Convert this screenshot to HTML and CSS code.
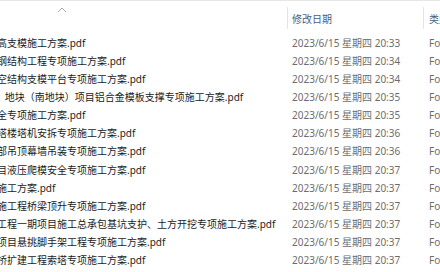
FILE: index.html
```html
<!DOCTYPE html>
<html lang="zh-CN">
<head>
<meta charset="utf-8">
<link rel="stylesheet" href="styles.css">
</head>
<body>
<div class="view">
  <div class="header">
    <div class="h-name">
      <svg class="sort" width="10" height="6" viewBox="0 0 10 6"><polyline points="1,5 5,1 9,5" fill="none" stroke="#a9a9a9" stroke-width="1"/></svg>
    </div>
    <div class="sep"></div>
    <div class="h-date">修改日期</div>
    <div class="sep"></div>
    <div class="h-type">类型</div>
  </div>
  <div class="rows">
    <div class="row"><div class="name"><span>高支模施工方案.pdf</span></div><div class="date">2023/6/15 星期四 20:33</div><div class="type">Foxit PDF Reader Document</div></div>
    <div class="row"><div class="name"><span>钢结构工程专项施工方案.pdf</span></div><div class="date">2023/6/15 星期四 20:34</div><div class="type">Foxit PDF Reader Document</div></div>
    <div class="row"><div class="name"><span>空结构支模平台专项施工方案.pdf</span></div><div class="date">2023/6/15 星期四 20:34</div><div class="type">Foxit PDF Reader Document</div></div>
    <div class="row"><div class="name"><span>&nbsp;&nbsp;&nbsp;地块（南地块）项目铝合金模板支撑专项施工方案.pdf</span></div><div class="date">2023/6/15 星期四 20:35</div><div class="type">Foxit PDF Reader Document</div></div>
    <div class="row"><div class="name"><span>全专项施工方案.pdf</span></div><div class="date">2023/6/15 星期四 20:35</div><div class="type">Foxit PDF Reader Document</div></div>
    <div class="row"><div class="name"><span>塔楼塔机安拆专项施工方案.pdf</span></div><div class="date">2023/6/15 星期四 20:36</div><div class="type">Foxit PDF Reader Document</div></div>
    <div class="row"><div class="name"><span>部吊顶幕墙吊装专项施工方案.pdf</span></div><div class="date">2023/6/15 星期四 20:36</div><div class="type">Foxit PDF Reader Document</div></div>
    <div class="row"><div class="name"><span>目液压爬模安全专项施工方案.pdf</span></div><div class="date">2023/6/15 星期四 20:37</div><div class="type">Foxit PDF Reader Document</div></div>
    <div class="row"><div class="name"><span>施工方案.pdf</span></div><div class="date">2023/6/15 星期四 20:37</div><div class="type">Foxit PDF Reader Document</div></div>
    <div class="row"><div class="name"><span>施工程桥梁顶升专项施工方案.pdf</span></div><div class="date">2023/6/15 星期四 20:37</div><div class="type">Foxit PDF Reader Document</div></div>
    <div class="row"><div class="name"><span>工程一期项目施工总承包基坑支护、土方开挖专项施工方案.pdf</span></div><div class="date">2023/6/15 星期四 20:37</div><div class="type">Foxit PDF Reader Document</div></div>
    <div class="row"><div class="name"><span>项目悬挑脚手架工程专项施工方案.pdf</span></div><div class="date">2023/6/15 星期四 20:37</div><div class="type">Foxit PDF Reader Document</div></div>
    <div class="row"><div class="name"><span>桥扩建工程索塔专项施工方案.pdf</span></div><div class="date">2023/6/15 星期四 20:37</div><div class="type">Foxit PDF Reader Document</div></div>
  </div>
</div>
</body>
</html>
```

FILE: styles.css
```css
html, body {
  margin: 0;
  padding: 0;
  background: #ffffff;
  overflow: hidden;
}
.view {
  width: 440px;
  height: 272px;
  overflow: hidden;
  border-top: 1px solid #e6e6e6;
  box-sizing: border-box;
  font-family: "Noto Sans", "Noto Sans CJK SC", sans-serif;
  font-size: 10px;
}
.header {
  display: flex;
  align-items: center;
  height: 33px;
  white-space: nowrap;
}
.h-name {
  width: 287px;
  flex: none;
  align-self: flex-start;
  padding: 6px 0 0 57px;
  box-sizing: border-box;
  height: 100%;
}
.sort {
  display: block;
}
.sep {
  width: 1px;
  height: 22px;
  background: #e5e5e5;
  flex: none;
}
.h-date {
  width: 135px;
  flex: none;
  padding-left: 4px;
  padding-top: 1px;
  box-sizing: border-box;
  color: #4c607a;
}
.h-type {
  padding-left: 5px;
  padding-top: 1px;
  color: #4c607a;
}
.rows {
  display: flex;
  flex-direction: column;
}
.row {
  display: grid;
  grid-template-columns: 288px 136px 1fr;
  height: 18.08px;
  line-height: 18.08px;
  white-space: nowrap;
}
.name {
  overflow: hidden;
  color: #1b1b1b;
}
.name span {
  display: block;
  margin-left: -3px;
}
.date {
  padding-left: 4px;
  color: #6d6d6d;
  overflow: hidden;
}
.type {
  padding-left: 5px;
  color: #6d6d6d;
  overflow: hidden;
}
```
